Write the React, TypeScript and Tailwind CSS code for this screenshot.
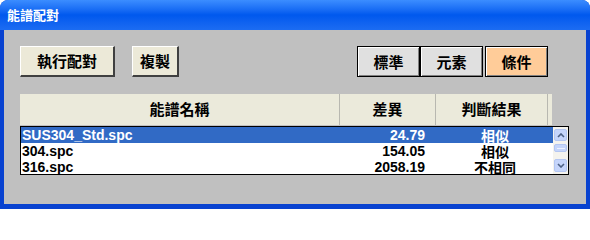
const cjk = { fontFamily: '"Noto Sans CJK TC", "Noto Sans CJK SC", sans-serif' };
const latin = { fontFamily: '"Liberation Sans", Arial, "Noto Sans CJK TC", sans-serif' };

const rows = [
  { name: "SUS304_Std.spc", diff: "24.79", result: "相似", selected: true },
  { name: "304.spc", diff: "154.05", result: "相似", selected: false },
  { name: "316.spc", diff: "2058.19", result: "不相同", selected: false },
];

const ToggleButton = ({ label, active }: { label: string; active?: boolean }) => (
  <button
    style={cjk}
    className={`w-[63px] h-[31px] border border-black shadow-[inset_1px_1px_0_#ffffff,inset_-1px_-1px_0_#808080] text-[15px] font-bold text-black leading-none ${
      active ? "bg-[#ffcc99]" : "bg-[#e0e0e0]"
    }`}
  >
    {label}
  </button>
);

const App = () => {
  return (
    <div className="w-[590px] h-[209px] bg-[#0842d0] rounded-t-[8px] flex flex-col overflow-hidden">
      <div
        style={cjk}
        className="h-[30px] shrink-0 flex items-center px-[7px] bg-gradient-to-b from-[#3b8dff] via-[#0058ee] to-[#1c6cf2] text-white text-[13px] font-bold"
      >
        能譜配對
      </div>

      <div className="flex-1 ml-[4px] mr-[4px] mb-[5px] bg-[#c0c0c0] pl-[16px] pt-[16px] flex flex-col">
        <div className="flex items-center h-[31px]">
          <button
            style={cjk}
            className="w-[95px] h-[31px] bg-[#ece9d8] border-t border-l border-white border-r-2 border-b-2 border-r-[#404040] border-b-[#404040] text-[15px] font-bold text-black"
          >
            執行配對
          </button>
          <button
            style={cjk}
            className="ml-[17px] w-[47px] h-[31px] bg-[#ece9d8] border-t border-l border-white border-r-2 border-b-2 border-r-[#404040] border-b-[#404040] text-[15px] font-bold text-black"
          >
            複製
          </button>
          <div className="ml-[178px] flex">
            <ToggleButton label="標準" />
            <ToggleButton label="元素" />
            <div className="w-[2px]" />
            <ToggleButton label="條件" active />
          </div>
        </div>

        <div
          style={cjk}
          className="mt-[17px] w-[532px] h-[31px] bg-[#ebeadb] flex text-[15px] font-bold text-black"
        >
          <div className="w-[320px] flex items-center justify-center border-r border-[#b8b8b0]">能譜名稱</div>
          <div className="w-[96px] flex items-center justify-center border-r border-[#b8b8b0]">差異</div>
          <div className="w-[112px] flex items-center justify-center border-r border-[#b8b8b0]">判斷結果</div>
        </div>

        <div className="mt-[1px] w-[549px] h-[49px] border border-black bg-white flex">
          <div className="flex-1 flex flex-col">
            {rows.map((r) => (
              <div
                key={r.name}
                className={`h-[16px] flex items-center ${r.selected ? "bg-[#316ac5] text-white" : "text-black"}`}
              >
                <div style={latin} className="w-[320px] pl-[1px] text-[14px] font-bold leading-[16px]">
                  {r.name}
                </div>
                <div style={latin} className="w-[84px] text-right text-[14px] font-bold leading-[16px]">
                  {r.diff}
                </div>
                <div style={cjk} className="ml-[12px] w-[116px] text-center text-[14px] font-bold leading-[16px]">
                  {r.result}
                </div>
              </div>
            ))}
          </div>
          <div className="w-[16px] flex flex-col bg-[#f4f3ee] py-[2px] px-[1px] gap-[2px]">
            <div className="h-[12px] rounded-[2px] bg-[#c5d5fb] border border-[#b3c6f2] flex items-center justify-center">
              <svg width="8" height="5" viewBox="0 0 8 5">
                <path d="M1 4 L4 1 L7 4" stroke="#4d6185" strokeWidth="1.6" fill="none" />
              </svg>
            </div>
            <div className="h-[8px] mt-[1px] rounded-[2px] bg-[#c5d5fb] border border-[#b3c6f2] flex items-center justify-center">
              <div className="w-[8px] h-[1px] bg-[#eef3ff]" />
            </div>
            <div className="flex-1" />
            <div className="h-[13px] rounded-[2px] bg-[#c5d5fb] border border-[#b3c6f2] flex items-center justify-center">
              <svg width="8" height="5" viewBox="0 0 8 5">
                <path d="M1 1 L4 4 L7 1" stroke="#4d6185" strokeWidth="1.6" fill="none" />
              </svg>
            </div>
          </div>
        </div>
      </div>
    </div>
  );
};

export default App;
